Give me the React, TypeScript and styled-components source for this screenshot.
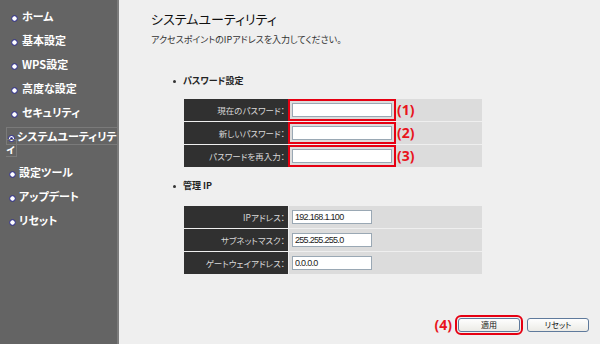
import React from "react";
import styled, { createGlobalStyle } from "styled-components";

const GlobalStyle = createGlobalStyle`
  html, body { margin: 0; padding: 0; }
  body {
    background: #efefef;
    font-family: "Noto Sans CJK JP", "Noto Sans", sans-serif;
    font-feature-settings: "palt";
  }
`;

const Page = styled.div`
  display: flex;
  width: 600px;
  height: 344px;
  overflow: hidden;
`;

const Sidebar = styled.nav`
  width: 117px;
  flex: none;
  background: #646464;
  border-right: 2px solid #7c7c7c;
  padding-top: 4px;
`;

const NavList = styled.ul`
  list-style: none;
  margin: 0;
  padding: 0;
`;

const NavItem = styled.li<{ $indent: number }>`
  padding: 6px 0 6px ${(p) => p.$indent}px;
  line-height: 12px;
  font-size: 11px;
  font-weight: bold;
  color: #fff;
`;

const NavLink = styled.span<{ $active?: boolean }>`
  border: 1px solid ${(p) => (p.$active ? "#7a7a7a" : "transparent")};
  padding: 0 1px;
`;

const BulletSvg = styled.svg<{ $gap: number }>`
  display: inline-block;
  vertical-align: -0.5px;
  margin-right: ${(p) => p.$gap}px;
`;

const Bullet = ({ active, gap }: { active?: boolean; gap: number }) => (
  <BulletSvg $gap={gap} width="7" height="7" viewBox="0 0 7 7">
    {active ? (
      <>
        <circle cx="3.5" cy="3.5" r="3" fill="#fff" stroke="#23238a" strokeWidth="1" />
        <circle cx="3.5" cy="3.5" r="1.3" fill="#23238a" />
      </>
    ) : (
      <circle cx="3.5" cy="3.5" r="2.8" fill="#fff" stroke="#23238a" strokeWidth="1" />
    )}
  </BulletSvg>
);

const Main = styled.main`
  flex: 1;
  padding: 11px 0 0 32px;
  color: #222;
`;

const Heading = styled.h1`
  margin: 0;
  font-size: 13px;
  line-height: 16px;
  font-weight: normal;
  color: #111;
`;

const Intro = styled.p`
  margin: 7px 0 0;
  font-size: 9px;
  line-height: 12px;
  color: #333;
`;

const SectionTitle = styled.h2<{ $top: number }>`
  margin: ${(p) => p.$top}px 0 0;
  padding-left: 22px;
  font-size: 9px;
  line-height: 12px;
  font-weight: bold;
  color: #222;
  display: flex;
  align-items: center;
  &::before {
    content: "";
    width: 3px;
    height: 3px;
    border-radius: 50%;
    background: #333;
    margin-right: 7px;
  }
`;

const Table = styled.div<{ $top: number }>`
  margin: ${(p) => p.$top}px 0 0 33px;
  width: 298px;
  display: grid;
  grid-template-columns: 104px 1fr;
  grid-auto-rows: 22px;
  gap: 1px;
`;

const LabelCell = styled.div`
  background: #303030;
  color: #d8d8d8;
  font-size: 8.5px;
  display: flex;
  align-items: center;
  justify-content: flex-end;
  padding-right: 3px;
`;

const FieldCell = styled.div`
  background: #dcdcdc;
  display: flex;
  align-items: center;
  padding-left: 3px;
`;

const TextInput = styled.input<{ $w: number; $marked?: boolean }>`
  box-sizing: border-box;
  width: ${(p) => p.$w}px;
  height: 14px;
  margin: 0;
  padding: 0 2px;
  border: 1px solid #9aa8b4;
  background: #fff;
  font-family: "Liberation Sans", Arial, sans-serif;
  font-size: 9px;
  letter-spacing: -0.7px;
  color: #222;
  outline: ${(p) => (p.$marked ? "2px solid #e60012" : "none")};
  outline-offset: 2px;
`;

const Marker = styled.span<{ $gap: number }>`
  font-family: "Noto Sans", "Liberation Sans", sans-serif;
  font-weight: bold;
  font-size: 14px;
  line-height: 14px;
  color: #e8141c;
  margin-left: ${(p) => p.$gap}px;
`;

const ButtonRow = styled.div`
  margin-top: 44px;
  padding-right: 11px;
  display: flex;
  align-items: center;
  justify-content: flex-end;
`;

const ButtonMarker = styled(Marker)`
  margin-right: 6px;
`;

const Button = styled.button<{ $marked?: boolean }>`
  box-sizing: border-box;
  width: 62px;
  height: 14px;
  margin: 0 0 0 ${(p) => (p.$marked ? 0 : 7)}px;
  padding: 0;
  border: 1px solid #5f7a9c;
  border-radius: 3px;
  background: linear-gradient(#fefefe, #ecebe6);
  font-family: "Noto Sans CJK JP", sans-serif;
  font-feature-settings: "palt";
  font-size: 8px;
  line-height: 12px;
  color: #111;
  outline: ${(p) => (p.$marked ? "2px solid #e60012" : "none")};
  outline-offset: 1px;
`;

const navItems = [
  { label: "ホーム", indent: 9, gap: 4 },
  { label: "基本設定", indent: 9, gap: 4 },
  { label: "WPS設定", indent: 9, gap: 4 },
  { label: "高度な設定", indent: 9, gap: 4 },
  { label: "セキュリティ", indent: 9, gap: 4 },
  { label: "システムユーティリティ", indent: 6, gap: 2, active: true },
  { label: "設定ツール", indent: 7, gap: 3 },
  { label: "アップデート", indent: 7, gap: 3 },
  { label: "リセット", indent: 7, gap: 3 },
];

const passwordRows = [
  { label: "現在のパスワード：", mark: "(1)" },
  { label: "新しいパスワード：", mark: "(2)" },
  { label: "パスワードを再入力：", mark: "(3)" },
];

const ipRows = [
  { label: "IPアドレス：", value: "192.168.1.100" },
  { label: "サブネットマスク：", value: "255.255.255.0" },
  { label: "ゲートウェイアドレス：", value: "0.0.0.0" },
];

export default function App() {
  return (
    <>
      <GlobalStyle />
      <Page>
        <Sidebar>
          <NavList>
            {navItems.map((it) => (
              <NavItem key={it.label} $indent={it.indent}>
                <NavLink $active={it.active}>
                  <Bullet active={it.active} gap={it.gap} />
                  {it.label}
                </NavLink>
              </NavItem>
            ))}
          </NavList>
        </Sidebar>
        <Main>
          <Heading>システムユーティリティ</Heading>
          <Intro>アクセスポイントのIPアドレスを入力してください。</Intro>
          <SectionTitle $top={29}>パスワード設定</SectionTitle>
          <Table $top={12}>
            {passwordRows.map((r) => (
              <React.Fragment key={r.label}>
                <LabelCell>{r.label}</LabelCell>
                <FieldCell>
                  <TextInput type="password" $w={100} $marked />
                  <Marker $gap={5}>{r.mark}</Marker>
                </FieldCell>
              </React.Fragment>
            ))}
          </Table>
          <SectionTitle $top={13}>管理 IP</SectionTitle>
          <Table $top={14}>
            {ipRows.map((r) => (
              <React.Fragment key={r.label}>
                <LabelCell>{r.label}</LabelCell>
                <FieldCell>
                  <TextInput type="text" $w={80} defaultValue={r.value} />
                </FieldCell>
              </React.Fragment>
            ))}
          </Table>
          <ButtonRow>
            <ButtonMarker $gap={0}>(4)</ButtonMarker>
            <Button $marked>適用</Button>
            <Button>リセット</Button>
          </ButtonRow>
        </Main>
      </Page>
    </>
  );
}
